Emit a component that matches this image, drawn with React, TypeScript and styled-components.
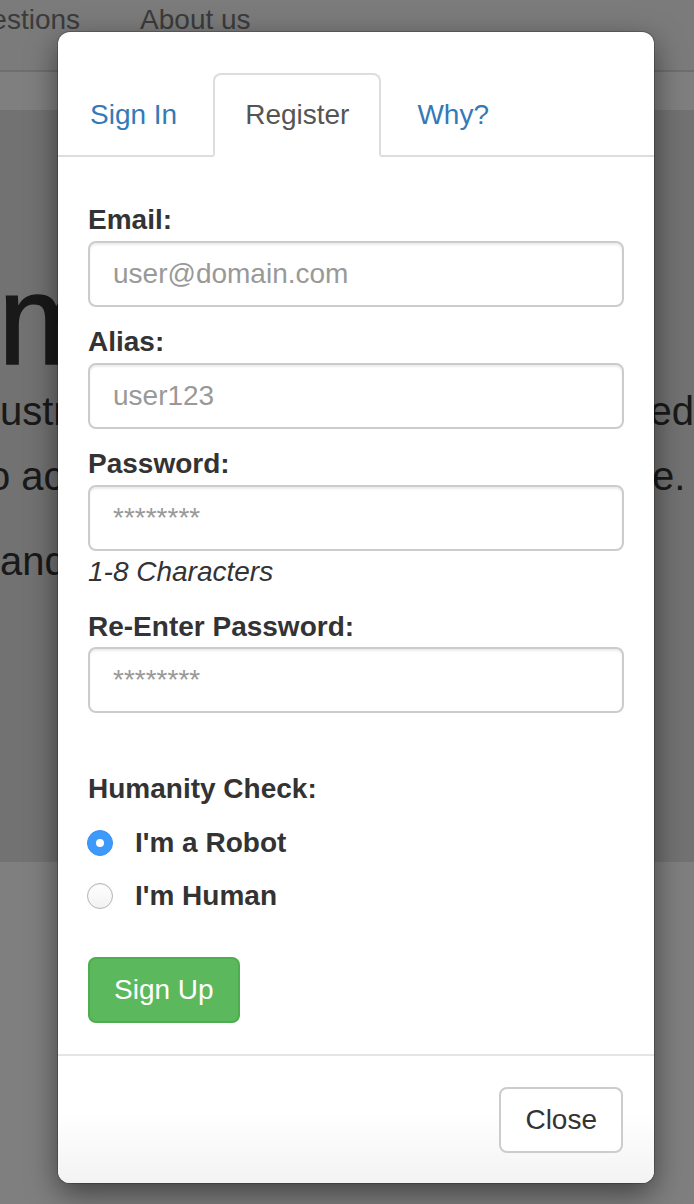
import React from "react";
import styled, { createGlobalStyle } from "styled-components";

const GlobalStyle = createGlobalStyle`
  html, body { margin: 0; padding: 0; }
  body {
    font-family: "Liberation Sans", Arial, Helvetica, sans-serif;
    background: #fff;
    color: #333;
    overflow: hidden;
  }
  * { box-sizing: border-box; }
`;

const Page = styled.div`
  position: relative;
  width: 694px;
  height: 1204px;
  overflow: hidden;
  background: #fff;
`;

const NavBar = styled.nav`
  height: 72px;
  background: #f6f6f6;
  border-bottom: 2px solid #dcdcdc;
  display: flex;
  align-items: flex-start;
  overflow: hidden;
`;

const NavList = styled.div`
  display: flex;
  margin-left: -76px;
  white-space: nowrap;
`;

const NavLink = styled.a`
  font-size: 28px;
  line-height: 40px;
  color: #777;
  padding: 0 30px;
  text-decoration: none;
`;

const Band = styled.div`
  height: 38px;
  background: #fff;
`;

const Jumbotron = styled.section`
  height: 752px;
  background: #e4e4e4;
  padding-top: 130px;
  overflow: hidden;
  color: #333;
`;

const Title = styled.h1`
  margin: 10px 0 -10px -2px;
  font-size: 128px;
  line-height: 139px;
  font-weight: 400;
  white-space: nowrap;
  -webkit-text-stroke: 1.5px #333;
`;

const Para = styled.div<{ $gap?: number }>`
  margin-top: ${(p) => p.$gap ?? 0}px;
`;

const Line = styled.div`
  display: flex;
  font-size: 40px;
  line-height: 65px;
  white-space: nowrap;
`;

const LeftFrag = styled.span<{ $shift?: number }>`
  margin-left: ${(p) => p.$shift ?? 0}px;
`;

const RightFrag = styled.span<{ $width: number }>`
  margin-left: auto;
  flex: 0 0 ${(p) => p.$width}px;
  overflow: visible;
`;

const Backdrop = styled.div`
  position: absolute;
  inset: 0;
  background: rgba(0, 0, 0, 0.5);
`;

const ModalLayer = styled.div`
  position: absolute;
  inset: 0;
  padding: 32px 0 0 58px;
`;

const Dialog = styled.div`
  width: 596px;
  background: #fff;
  border-radius: 12px;
  overflow: hidden;
  box-shadow: 0 0 0 1px rgba(0, 0, 0, 0.2), 0 10px 30px rgba(0, 0, 0, 0.5);
  display: flex;
  flex-direction: column;
`;

const TabList = styled.div`
  display: flex;
  padding-top: 41px;
  border-bottom: 2px solid #ddd;
`;

const Tab = styled.a<{ $active?: boolean }>`
  display: block;
  margin: 0 4px -2px 0;
  padding: 20px 30px;
  font-size: 28px;
  line-height: 40px;
  text-decoration: none;
  border: 2px solid transparent;
  border-radius: 8px 8px 0 0;
  color: ${(p) => (p.$active ? "#555" : "#337ab7")};
  background: ${(p) => (p.$active ? "#fff" : "transparent")};
  border-color: ${(p) => (p.$active ? "#ddd #ddd transparent" : "transparent")};
`;

const Body = styled.form`
  display: flex;
  flex-direction: column;
  padding: 46px 30px 31px;
`;

const Field = styled.div<{ $after?: number }>`
  display: flex;
  flex-direction: column;
  margin-bottom: ${(p) => p.$after ?? 0}px;
`;

const Label = styled.label<{ $space?: number }>`
  display: block;
  font-size: 28px;
  line-height: 34px;
  font-weight: 700;
  color: #333;
  margin-bottom: ${(p) => p.$space ?? 4}px;
`;

const Input = styled.input`
  display: block;
  width: 100%;
  height: 66px;
  padding: 0 23px;
  font-family: inherit;
  font-size: 28px;
  color: #555;
  background: #fff;
  border: 2px solid #ccc;
  border-radius: 8px;
  box-shadow: inset 0 2px 2px rgba(0, 0, 0, 0.075);
  outline: none;
  &::placeholder {
    color: #999;
  }
`;

const Help = styled.span`
  display: block;
  margin-top: 4px;
  font-size: 28px;
  line-height: 34px;
  font-style: italic;
  color: #333;
`;

const RadioList = styled.div`
  display: flex;
  flex-direction: column;
  gap: 19px;
  margin-top: 20px;
`;

const RadioRow = styled.label`
  display: flex;
  align-items: center;
  gap: 22px;
  height: 34px;
  margin-left: -1px;
  font-size: 28px;
  font-weight: 700;
  color: #333;
`;

const Radio = styled.input`
  appearance: none;
  -webkit-appearance: none;
  margin: 0;
  width: 26px;
  height: 26px;
  border-radius: 50%;
  display: grid;
  place-items: center;
  border: 1px solid #b4b4b4;
  background: linear-gradient(#fff, #f2f2f2);
  box-shadow: inset 0 1px 1px rgba(0, 0, 0, 0.06);
  &:checked {
    border-color: #3a90ee;
    background: #3d99fa;
    box-shadow: none;
  }
  &:checked::after {
    content: "";
    width: 8px;
    height: 8px;
    border-radius: 50%;
    background: #fff;
  }
`;

const Button = styled.button<{ $variant?: "success" | "default" }>`
  align-self: flex-start;
  height: 66px;
  padding: 0 24px;
  font-family: inherit;
  font-size: 28px;
  border-radius: 8px;
  border: 2px solid ${(p) => (p.$variant === "success" ? "#4cae4c" : "#ccc")};
  background: ${(p) => (p.$variant === "success" ? "#5cb85c" : "#fff")};
  color: ${(p) => (p.$variant === "success" ? "#fff" : "#333")};
  cursor: pointer;
`;

const SubmitRow = styled.div`
  display: flex;
  margin-top: 44px;
`;

const Footer = styled.div`
  display: flex;
  justify-content: flex-end;
  padding: 31px 31px 30px;
  border-top: 2px solid #e5e5e5;
  background: linear-gradient(to bottom, #fff 45%, #f3f3f3 100%);
`;

export default function App() {
  return (
    <Page>
      <GlobalStyle />
      <NavBar>
        <NavList>
          <NavLink>Questions</NavLink>
          <NavLink>About us</NavLink>
        </NavList>
      </NavBar>
      <Band />
      <Jumbotron>
        <Title>m</Title>
        <Para>
          <Line>
            <LeftFrag>ustr</LeftFrag>
            <RightFrag $width={58}>ked</RightFrag>
          </Line>
          <Line>
            <LeftFrag $shift={-12}>o ac</LeftFrag>
            <RightFrag $width={42}>e.</RightFrag>
          </Line>
        </Para>
        <Para $gap={20}>
          <Line>
            <LeftFrag>and</LeftFrag>
          </Line>
        </Para>
      </Jumbotron>

      <Backdrop />
      <ModalLayer>
        <Dialog>
          <TabList>
            <Tab>Sign In</Tab>
            <Tab $active>Register</Tab>
            <Tab>Why?</Tab>
          </TabList>
          <Body onSubmit={(e) => e.preventDefault()}>
            <Field $after={18}>
              <Label>Email:</Label>
              <Input type="email" placeholder="user@domain.com" />
            </Field>
            <Field $after={18}>
              <Label>Alias:</Label>
              <Input type="text" placeholder="user123" />
            </Field>
            <Field $after={21}>
              <Label>Password:</Label>
              <Input type="password" placeholder="********" />
              <Help>1-8 Characters</Help>
            </Field>
            <Field $after={59}>
              <Label $space={3}>Re-Enter Password:</Label>
              <Input type="password" placeholder="********" />
            </Field>
            <Field>
              <Label $space={0}>Humanity Check:</Label>
              <RadioList>
                <RadioRow>
                  <Radio type="radio" name="humanity" defaultChecked />
                  I'm a Robot
                </RadioRow>
                <RadioRow>
                  <Radio type="radio" name="humanity" />
                  I'm Human
                </RadioRow>
              </RadioList>
            </Field>
            <SubmitRow>
              <Button type="submit" $variant="success">Sign Up</Button>
            </SubmitRow>
          </Body>
          <Footer>
            <Button type="button">Close</Button>
          </Footer>
        </Dialog>
      </ModalLayer>
    </Page>
  );
}
